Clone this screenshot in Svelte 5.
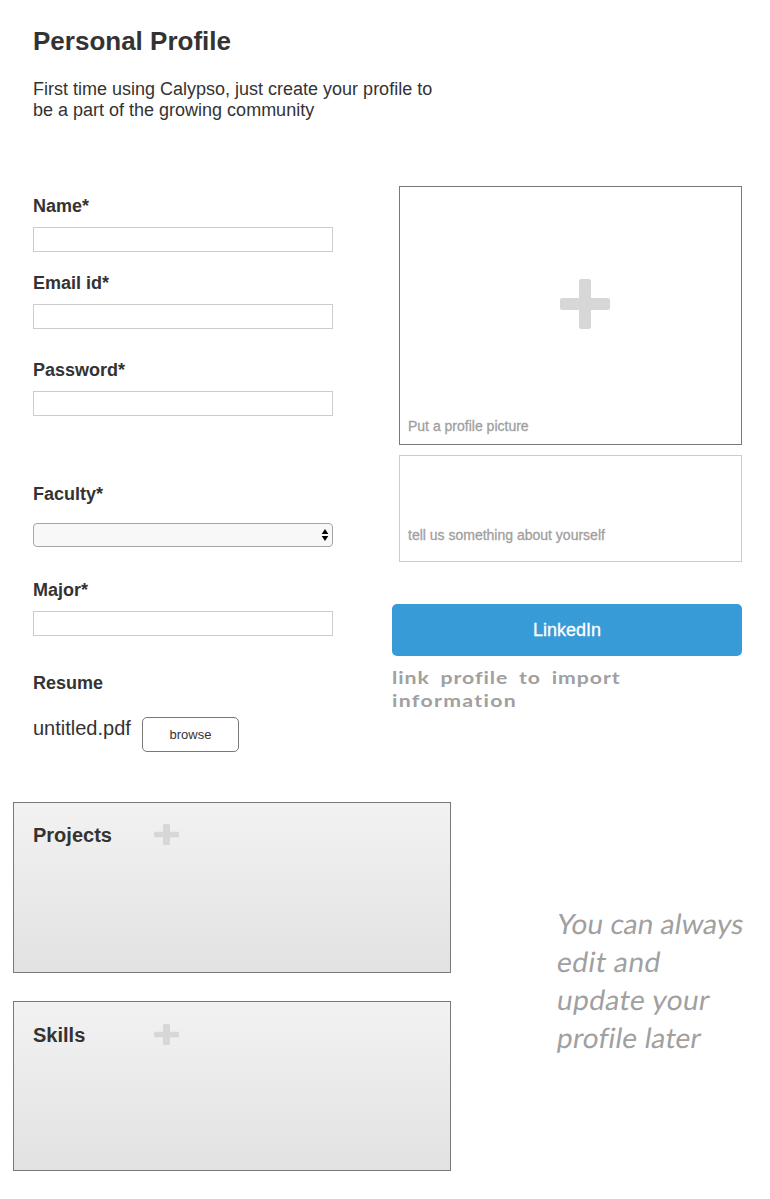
<script>
  let name = $state('');
  let email = $state('');
  let password = $state('');
  let major = $state('');
  const sections = ['Projects', 'Skills'];
</script>

<main>
  <header>
    <h1>Personal Profile</h1>
    <p>First time using Calypso, just create your profile to<br />be a part of the growing community</p>
  </header>

  <div class="columns">
    <form>
      <label class="name">Name*<input bind:value={name} /></label>
      <label class="email">Email id*<input bind:value={email} /></label>
      <label class="password">Password*<input type="password" bind:value={password} /></label>
      <label class="faculty">
        Faculty*
        <span class="select">
          <svg width="8" height="14" viewBox="0 0 8 14"><path d="M4 1 7.3 6H.7zM4 13 7.3 8H.7z" /></svg>
        </span>
      </label>
      <label class="major">Major*<input bind:value={major} /></label>
      <div class="resume">Resume</div>
      <div class="file">
        <span>untitled.pdf</span>
        <button type="button">browse</button>
      </div>
    </form>

    <aside>
      <div class="picture">
        <svg width="50" height="50" viewBox="0 0 50 50">
          <rect x="19" width="12" height="50" rx="2" /><rect y="19" width="50" height="12" rx="2" />
        </svg>
        <span class="hint">Put a profile picture</span>
      </div>
      <div class="about"><span class="hint">tell us something about yourself</span></div>
      <button class="linkedin" type="button"><span>LinkedIn</span></button>
      <p class="import"><span class="i1">link profile to import</span><br /><span class="i2">information</span></p>
    </aside>
  </div>

  <div class="bottom">
    <div class="panels">
      {#each sections as section}
        <section>
          <h2>{section}</h2>
          <svg width="25" height="21" viewBox="0 0 25 21">
            <rect x="9" width="7" height="21" rx="1.2" /><rect y="7.7" width="25" height="5.6" rx="1.2" />
          </svg>
        </section>
      {/each}
    </div>
    <p class="note">
      <span class="n1">You can always</span><span class="n2">edit and</span><span class="n3">update your</span><span class="n4">profile later</span>
    </p>
  </div>
</main>

<style>
  :global(body) { margin: 0; background: #fff; }
  main {
    box-sizing: border-box;
    width: 770px;
    height: 1199px;
    overflow: hidden;
    padding-top: 26px;
    background: #fff;
    color: #333;
    font: 18px/21px "Liberation Sans", Arial, sans-serif;
  }
  h1, h2, p { margin: 0; }
  header { height: 160px; padding-left: 33px; }
  h1 { font-size: 26px; line-height: 30px; }
  header p { margin-top: 23px; }
  .columns { display: flex; height: 616px; }
  form { width: 300px; margin-left: 33px; padding-top: 10px; }
  label { display: block; font-weight: bold; }
  .email { margin-top: 21px; }
  .password { margin-top: 31px; }
  .faculty { margin-top: 68px; }
  .major { margin-top: 33px; }
  .resume { margin-top: 37px; font-weight: bold; }
  input {
    display: block;
    box-sizing: border-box;
    width: 300px;
    height: 25px;
    margin: 10px 0 0;
    padding: 2px 4px;
    border: 1px solid #ccc;
    border-radius: 0;
    background: #fff;
    outline: 0;
  }
  .select {
    display: flex;
    box-sizing: border-box;
    height: 24px;
    margin-top: 18px;
    padding-right: 3px;
    align-items: center;
    justify-content: flex-end;
    border: 1px solid #a6a6a6;
    border-radius: 4px;
    background: #f8f8f8;
  }
  .select svg { fill: #000; }
  .file { display: flex; margin-top: 22px; font-size: 20px; line-height: 24px; }
  .file span { width: 109px; }
  .file button {
    width: 97px;
    height: 35px;
    margin-top: 1px;
    padding: 0;
    border: 1px solid #797979;
    border-radius: 5px;
    background: #fff;
    color: #333;
    font: 13px "Liberation Sans", Arial, sans-serif;
  }
  aside { width: 350px; margin-left: 59px; }
  .picture, .about {
    display: flex;
    box-sizing: border-box;
    width: 343px;
    margin-left: 7px;
    padding-left: 8px;
    flex-direction: column;
  }
  .picture { height: 259px; border: 1px solid #797979; }
  .picture svg { margin: 92px 0 0 152px; fill: #d7d7d7; }
  .picture .hint { margin-top: 89px; }
  .about { height: 107px; margin-top: 10px; border: 1px solid #ccc; }
  .about .hint { margin-top: 71px; }
  .hint { color: #a0a0a0; font-size: 14px; line-height: 16px; -webkit-text-stroke: .3px #a0a0a0; }
  .linkedin {
    display: block;
    width: 350px;
    height: 52px;
    margin-top: 42px;
    border: 0;
    border-radius: 5px;
    background: #379bd7;
    color: #fff;
    font: 18px "Liberation Sans", Arial, sans-serif;
    -webkit-text-stroke: .3px #fff;
  }
  .import { margin-top: 10px; color: #a0a0a0; font: bold 17px/23px Lato, cursive; white-space: nowrap; }
  .import span { display: inline-block; transform: scaleX(1.25); transform-origin: 0 70%; }
  .i1 { letter-spacing: .75px; word-spacing: 3.7px; }
  .i2 { letter-spacing: 1.05px; }
  .bottom { display: flex; }
  .panels { display: flex; width: 438px; margin-left: 13px; flex-direction: column; gap: 28px; }
  section {
    display: flex;
    box-sizing: border-box;
    height: 171px;
    padding: 20px 0 0 19px;
    border: 1px solid #797979;
    background: linear-gradient(#f2f2f2, #e2e2e2);
  }
  section + section { height: 170px; padding-top: 21px; }
  h2 { width: 121px; font-size: 20px; line-height: 24px; }
  section svg { margin-top: 1px; fill: #d7d7d7; }
  .note {
    display: flex;
    flex-direction: column;
    align-items: flex-start;
    margin: 102px 0 0 105px;
    color: #a0a0a0;
    font: 28px/38px Lato, "Open Sans", sans-serif;
    font-variant-ligatures: none;
    white-space: nowrap;
  }
  .note span { transform: skewX(-9deg); transform-origin: 0 76%; }
  .n1 { letter-spacing: .07px; }
  .n2 { letter-spacing: .5px; }
  .n3 { letter-spacing: .45px; }
  .n4 { letter-spacing: .2px; }
</style>
